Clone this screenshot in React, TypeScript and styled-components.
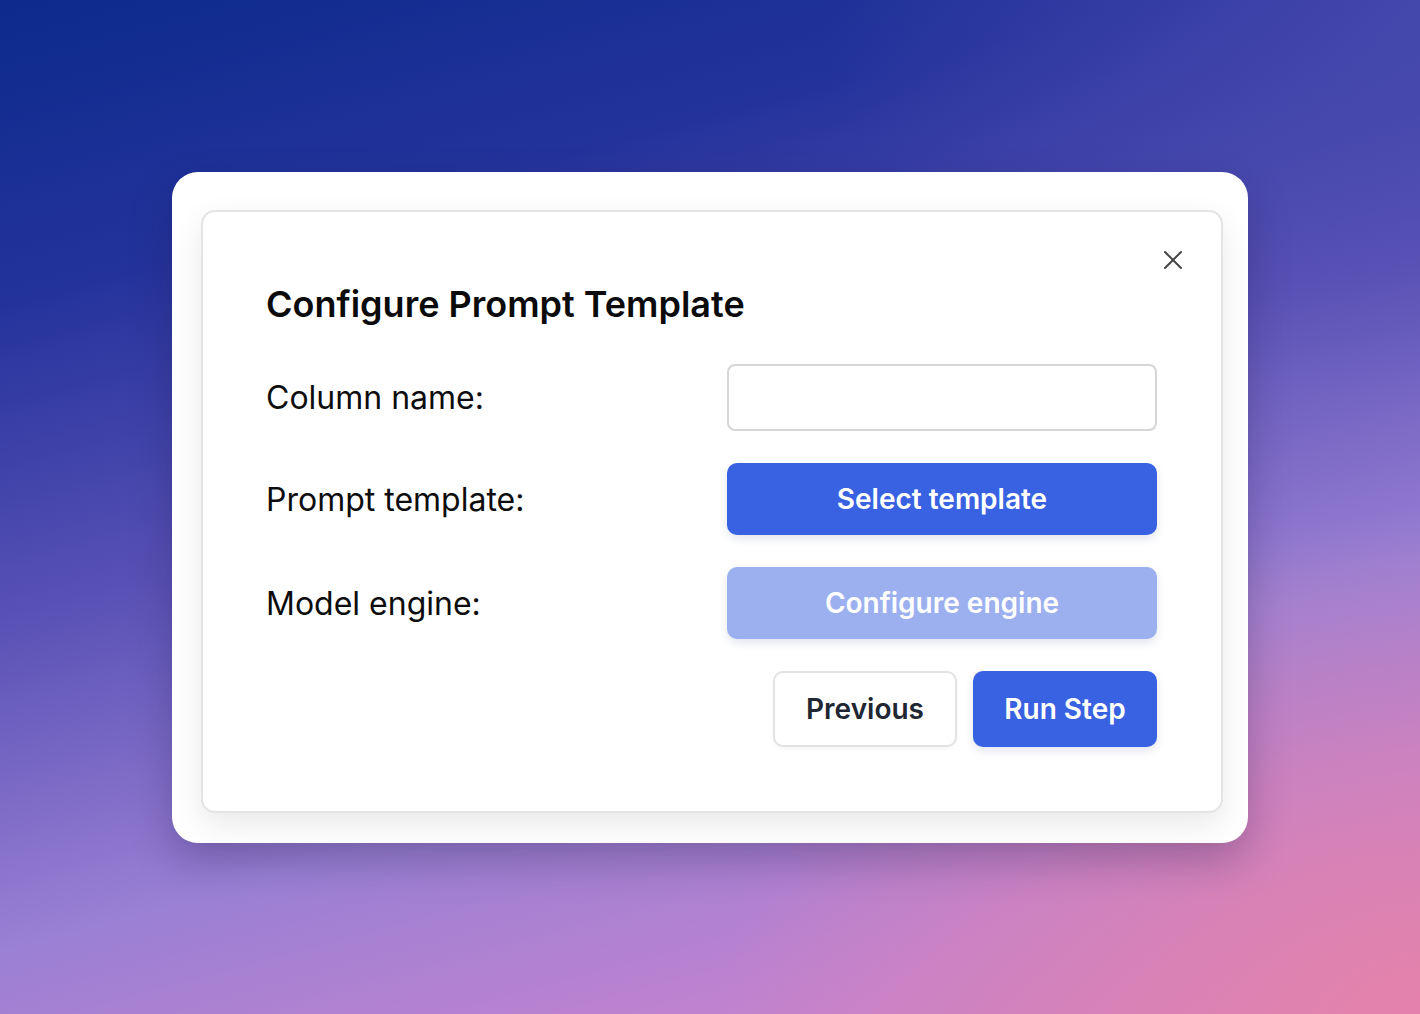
import * as React from 'react';
import styled, { createGlobalStyle } from 'styled-components';

const GlobalStyle = createGlobalStyle`
    html, body {
        margin: 0;
        padding: 0;
    }

    body {
        font-family: Inter, "Noto Sans", sans-serif;
        -webkit-font-smoothing: antialiased;
    }
`;

const Backdrop = styled.div`
    width: 1420px;
    height: 1014px;
    display: flex;
    align-items: flex-start;
    justify-content: center;
    padding-top: 172px;
    box-sizing: border-box;
    background:
        radial-gradient(ellipse 700px 500px at 100% 100%, rgba(230, 130, 168, 0.9), rgba(230, 130, 168, 0) 100%),
        radial-gradient(ellipse 600px 400px at 100% 0%, rgba(76, 76, 176, 0.7), rgba(76, 76, 176, 0) 100%),
        linear-gradient(165deg, #0c2a8c 0%, #24339c 22%, #5a52b6 45%, #9a80d4 68%, #bd82d0 85%, #d283c4 100%);
`;

const Frame = styled.div`
    width: 1076px;
    box-sizing: border-box;
    padding: 38px 25px 30px 29px;
    background: #fff;
    border-radius: 26px;
    box-shadow: 0 18px 40px rgba(30, 20, 70, 0.28);
`;

const Dialog = styled.div`
    position: relative;
    box-sizing: border-box;
    padding: 70px 64px 64px 65px;
    background: #fff;
    border: 2px solid #e4e4e4;
    border-radius: 14px;
    box-shadow: 0 12px 32px rgba(0, 0, 0, 0.09);
`;

const CloseButton = styled.button`
    position: absolute;
    top: 36px;
    right: 36px;
    width: 24px;
    height: 24px;
    padding: 0;
    border: 0;
    background: none;
    color: #444;
    display: flex;
    align-items: center;
    justify-content: center;
`;

const Title = styled.h2`
    margin: 0 0 38px -2px;
    font-size: 36px;
    line-height: 44px;
    font-weight: 600;
    color: #0b0b0b;
`;

const Form = styled.div`
    display: grid;
    grid-template-columns: 1fr 430px;
    row-gap: 32px;
    align-items: center;
`;

const Label = styled.label`
    margin-left: -2px;
    font-size: 32px;
    font-weight: 400;
    color: #0d0d0d;
`;

const TextInput = styled.input`
    box-sizing: border-box;
    width: 430px;
    height: 67px;
    border: 2px solid #d6d6d9;
    border-radius: 8px;
    background: #fff;
    font: inherit;
    font-size: 28px;
    padding: 0 16px;
    outline: none;
`;

const ActionButton = styled.button<{ $disabled?: boolean }>`
    box-sizing: border-box;
    width: 430px;
    height: 72px;
    border: 0;
    border-radius: 10px;
    background: ${p => (p.$disabled ? '#9cb0f0' : '#3862e2')};
    color: #fff;
    font-family: Inter, sans-serif;
    font-size: 28px;
    font-weight: 600;
    box-shadow: 0 4px 8px rgba(30, 50, 120, 0.12);
`;

const Footer = styled.div`
    display: flex;
    justify-content: flex-end;
    gap: 16px;
    margin-top: 32px;
`;

const FooterButton = styled.button<{ $primary?: boolean }>`
    box-sizing: border-box;
    width: 184px;
    height: 76px;
    border-radius: 10px;
    border: ${p => (p.$primary ? '0' : '2px solid #e2e2e2')};
    background: ${p => (p.$primary ? '#3862e2' : '#fff')};
    color: ${p => (p.$primary ? '#fff' : '#1f2733')};
    font-family: Inter, sans-serif;
    font-size: 28px;
    font-weight: 600;
    box-shadow: ${p => (p.$primary ? '0 4px 8px rgba(30, 50, 120, 0.12)' : '0 2px 4px rgba(0, 0, 0, 0.04)')};
`;

export default function App() {
    return (
        <>
            <GlobalStyle />
            <Backdrop>
                <Frame>
                    <Dialog>
                        <CloseButton aria-label="Close">
                            <svg width="20" height="20" viewBox="0 0 20 20" fill="none" stroke="currentColor" strokeWidth="2" strokeLinecap="round">
                                <path d="M2 2L18 18M18 2L2 18" />
                            </svg>
                        </CloseButton>
                        <Title>Configure Prompt Template</Title>
                        <Form>
                            <Label htmlFor="column-name">Column name:</Label>
                            <TextInput id="column-name" />
                            <Label>Prompt template:</Label>
                            <ActionButton>Select template</ActionButton>
                            <Label>Model engine:</Label>
                            <ActionButton $disabled>Configure engine</ActionButton>
                        </Form>
                        <Footer>
                            <FooterButton>Previous</FooterButton>
                            <FooterButton $primary>Run Step</FooterButton>
                        </Footer>
                    </Dialog>
                </Frame>
            </Backdrop>
        </>
    );
}
